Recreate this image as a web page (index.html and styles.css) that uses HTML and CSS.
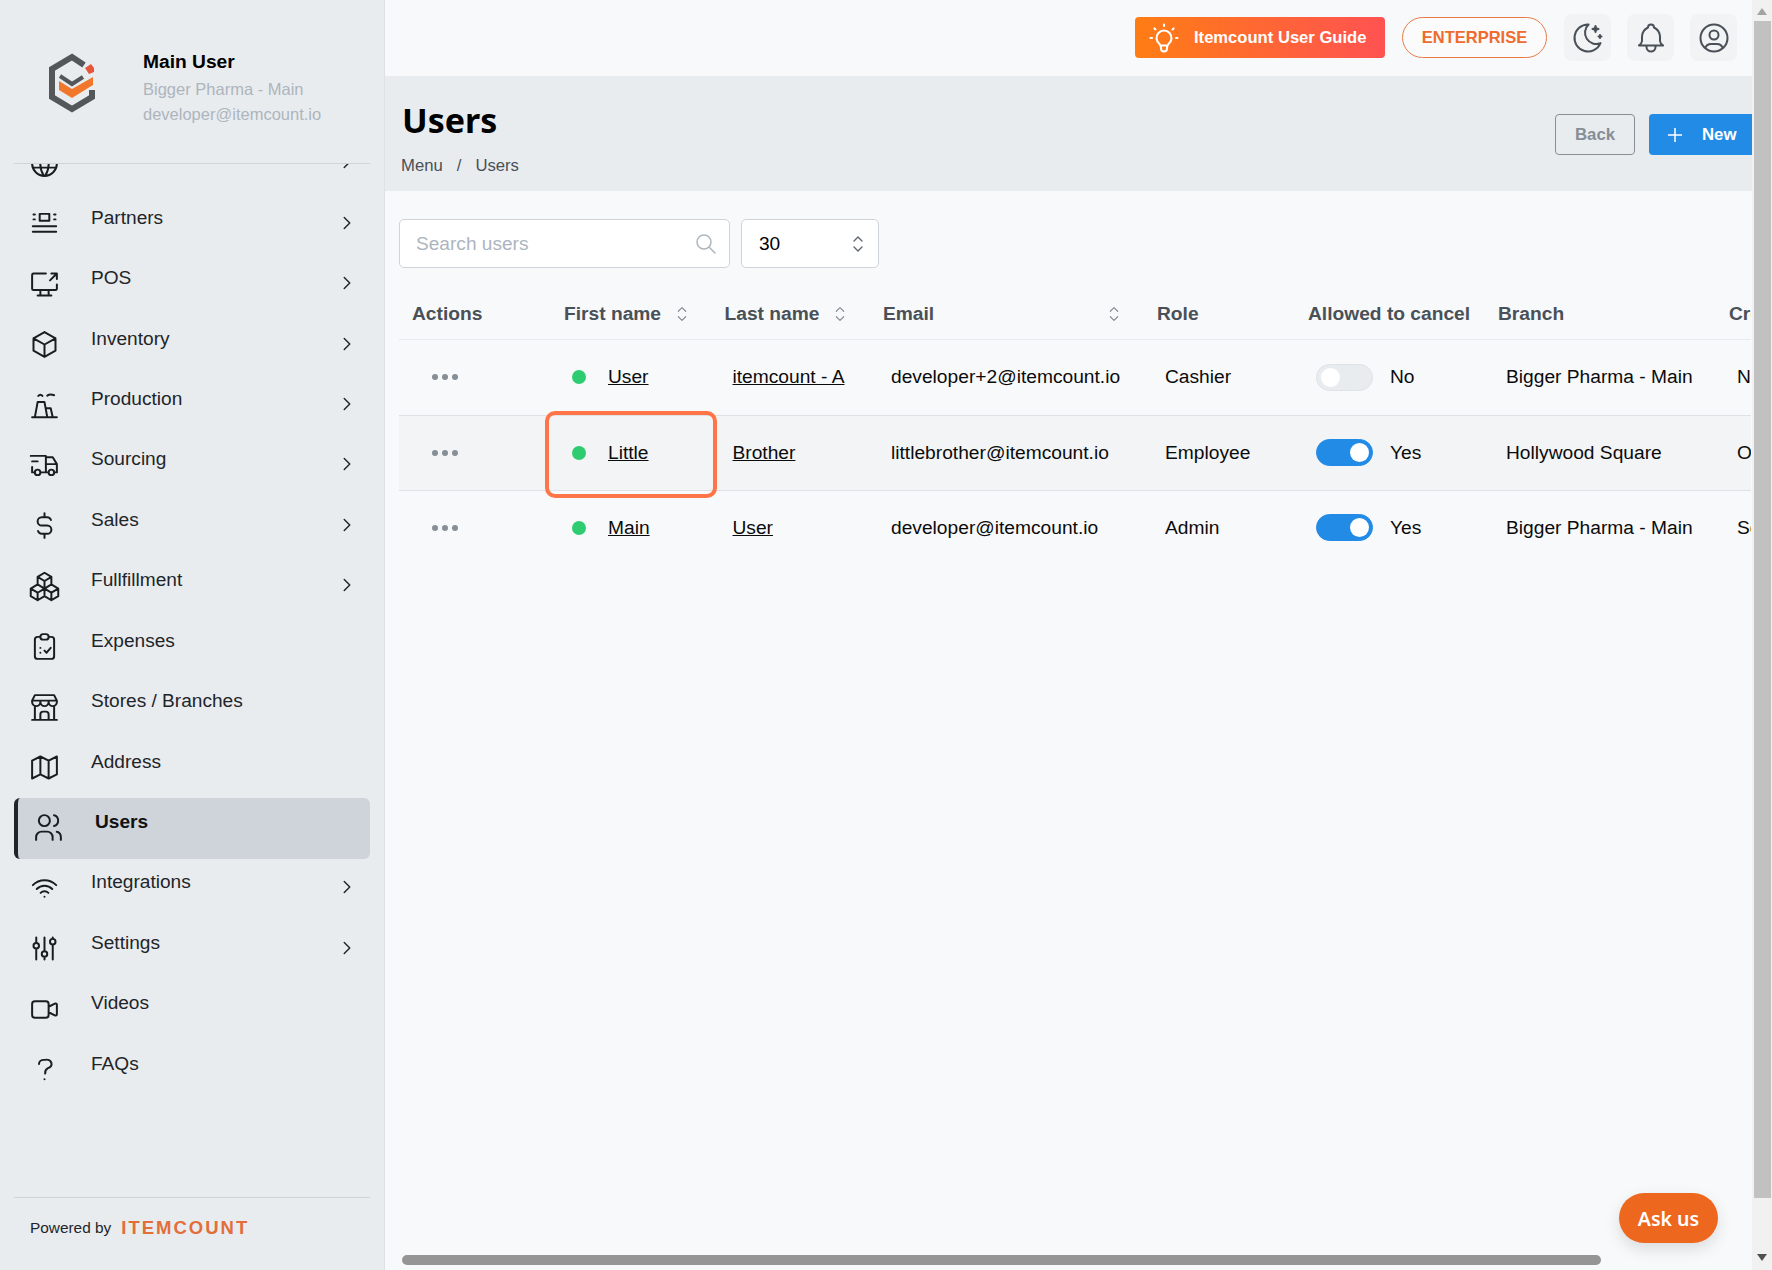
FILE: index.html
```html
<!DOCTYPE html>
<html lang="en">
<head>
    <meta charset="UTF-8">
    <title>Users</title>
    <link rel="stylesheet" href="styles.css">
</head>
<body>
    <svg class="icon-sprite" xmlns="http://www.w3.org/2000/svg">
        <symbol id="i-world" viewBox="0 0 24 24"><path d="M3 12a9 9 0 1 0 18 0a9 9 0 1 0 -18 0M3.600 9h16.800M3.600 15h16.800M11.500 3a17 17 0 0 0 0 18M12.500 3a17 17 0 0 1 0 18"/></symbol>
        <symbol id="i-partners" viewBox="0 0 24 24"><path d="M8.500 5h7v5h-7zM4 5.500h1M4 9h1M19 5.500h1M19 9h1M3.500 14h17M3.500 18h17"/></symbol>
        <symbol id="i-pos" viewBox="0 0 24 24"><path d="M21 12v3a1 1 0 0 1 -1 1h-16a1 1 0 0 1 -1 -1v-10a1 1 0 0 1 1 -1h9M7 20l10 0M9 16l0 4M15 16l0 4M17 4h4v4M16 9l5 -5"/></symbol>
        <symbol id="i-box" viewBox="0 0 24 24"><path d="M12 3l8 4.500l0 9l-8 4.500l-8 -4.500l0 -9l8 -4.500M12 12l8 -4.500M12 12l0 9M12 12l-8 -4.500"/></symbol>
        <symbol id="i-factory" viewBox="0 0 24 24"><path d="M3 20.500h18M5 20.500l2 -11h5l2 11M13 14h3.500l1.500 6.500M7.500 5c1 -1.200 2 -1.200 3 0M14 4.800c1.500 -1 3 -1 5 -.3"/></symbol>
        <symbol id="i-truck" viewBox="0 0 24 24"><path d="M7 17m-2 0a2 2 0 1 0 4 0a2 2 0 1 0 -4 0M17 17m-2 0a2 2 0 1 0 4 0a2 2 0 1 0 -4 0M5 17h-2v-4m-1 -8h11v12m-4 0h6m4 0h2v-6h-8m0 -5h5l3 5M3 9l4 0"/></symbol>
        <symbol id="i-dollar" viewBox="0 0 24 24"><path d="M16.700 8a3 3 0 0 0 -2.700 -2h-4a3 3 0 0 0 0 6h4a3 3 0 0 1 0 6h-4a3 3 0 0 1 -2.700 -2M12 3v3m0 12v3"/></symbol>
        <symbol id="i-packages" viewBox="0 0 24 24"><path d="M7 16.500l-5 -3l5 -3l5 3v5.500l-5 3zM2 13.500v5.500l5 3M7 16.545l5 -3.030M17 16.500l-5 -3l5 -3l5 3v5.500l-5 3zM12 19l5 3M17 16.500v5.500M17 16.500l5 -3M12 13.500v-5.500l-5 -3l5 -3l5 3v5.500M7 5.030v5.455M12 8l5 -3"/></symbol>
        <symbol id="i-clipboard" viewBox="0 0 24 24"><path d="M9 5h-2a2 2 0 0 0 -2 2v12a2 2 0 0 0 2 2h10a2 2 0 0 0 2 -2v-12a2 2 0 0 0 -2 -2h-2M9 5a2 2 0 0 1 2 -2h2a2 2 0 0 1 2 2v0a2 2 0 0 1 -2 2h-2a2 2 0 0 1 -2 -2zM9 16.500h.01M9 13h.01M12 15l1.500 1.500l3 -3.500"/></symbol>
        <symbol id="i-store" viewBox="0 0 24 24"><path d="M3 21l18 0M3 7v1a3 3 0 0 0 6 0v-1m0 1a3 3 0 0 0 6 0v-1m0 1a3 3 0 0 0 6 0v-1h-18l2 -4h14l2 4M5 21l0 -10.150M19 21l0 -10.150M9 21v-4a2 2 0 0 1 2 -2h2a2 2 0 0 1 2 2v4"/></symbol>
        <symbol id="i-map" viewBox="0 0 24 24"><path d="M3 7l6 -3l6 3l6 -3v13l-6 3l-6 -3l-6 3v-13M9 4v13M15 7v13"/></symbol>
        <symbol id="i-users" viewBox="0 0 24 24"><path d="M9 7m-4 0a4 4 0 1 0 8 0a4 4 0 1 0 -8 0M3 21v-2a4 4 0 0 1 4 -4h4a4 4 0 0 1 4 4v2M16 3.130a4 4 0 0 1 0 7.750M21 21v-2a4 4 0 0 0 -3 -3.850"/></symbol>
        <symbol id="i-wifi" viewBox="0 0 24 24"><path d="M12 18h.01M9.172 15.172a4 4 0 0 1 5.656 0M6.343 12.343a8 8 0 0 1 11.314 0M3.515 9.515c4.686 -4.687 12.284 -4.687 17 0"/></symbol>
        <symbol id="i-sliders" viewBox="0 0 24 24"><path d="M4 10a2 2 0 1 0 4 0a2 2 0 0 0 -4 0M6 4v4M6 12v8M10 16a2 2 0 1 0 4 0a2 2 0 0 0 -4 0M12 4v10M12 18v2M16 7a2 2 0 1 0 4 0a2 2 0 0 0 -4 0M18 4v1M18 9v11"/></symbol>
        <symbol id="i-video" viewBox="0 0 24 24"><path d="M15 10l4.553 -2.276a1 1 0 0 1 1.447 .894v6.764a1 1 0 0 1 -1.447 .894l-4.553 -2.276v-4M3 8a2 2 0 0 1 2 -2h8a2 2 0 0 1 2 2v8a2 2 0 0 1 -2 2h-8a2 2 0 0 1 -2 -2z"/></symbol>
        <symbol id="i-question" viewBox="0 0 24 24"><path d="M8 8a3.500 3 0 0 1 3.500 -3h1a3.500 3 0 0 1 2 6a3.500 4 0 0 0 -2 4M12 19l0 .01"/></symbol>
        <symbol id="i-chevron" viewBox="0 0 24 24"><path d="M9 6l6 6l-6 6"/></symbol>
        <symbol id="i-selector" viewBox="0 0 24 24"><path d="M8 9l4 -4l4 4M16 15l-4 4l-4 -4"/></symbol>
    </svg>

    <div class="app">
        <aside class="sidebar">
            <div class="profile">
                <svg class="logo" viewBox="0 0 48 60">
                    <path class="logo-hex" d="M36 12L24 4L4 16V44L24 56L44 44V37"/>
                    <path class="logo-check" d="M12 23L24 31L35 24"/>
                    <path class="logo-band" d="M11 28L24 36L45 24V32L24 45L11 37Z"/>
                    <path class="logo-dot" d="M37 15L43 11L46 15L46 19L41 21Z"/>
                </svg>
                <div class="profile-text">
                    <div class="profile-name">Main User</div>
                    <div class="profile-line">Bigger Pharma - Main</div>
                    <div class="profile-line">developer@itemcount.io</div>
                </div>
            </div>

            <nav class="nav">
                <ul class="nav-list">
                    <li class="nav-item"><svg class="nav-icon"><use href="#i-world"/></svg><span class="nav-label"></span><svg class="nav-arrow"><use href="#i-chevron"/></svg></li>
                    <li class="nav-item"><svg class="nav-icon"><use href="#i-partners"/></svg><span class="nav-label">Partners</span><svg class="nav-arrow"><use href="#i-chevron"/></svg></li>
                    <li class="nav-item"><svg class="nav-icon"><use href="#i-pos"/></svg><span class="nav-label">POS</span><svg class="nav-arrow"><use href="#i-chevron"/></svg></li>
                    <li class="nav-item"><svg class="nav-icon"><use href="#i-box"/></svg><span class="nav-label">Inventory</span><svg class="nav-arrow"><use href="#i-chevron"/></svg></li>
                    <li class="nav-item"><svg class="nav-icon"><use href="#i-factory"/></svg><span class="nav-label">Production</span><svg class="nav-arrow"><use href="#i-chevron"/></svg></li>
                    <li class="nav-item"><svg class="nav-icon"><use href="#i-truck"/></svg><span class="nav-label">Sourcing</span><svg class="nav-arrow"><use href="#i-chevron"/></svg></li>
                    <li class="nav-item"><svg class="nav-icon"><use href="#i-dollar"/></svg><span class="nav-label">Sales</span><svg class="nav-arrow"><use href="#i-chevron"/></svg></li>
                    <li class="nav-item"><svg class="nav-icon"><use href="#i-packages"/></svg><span class="nav-label">Fullfillment</span><svg class="nav-arrow"><use href="#i-chevron"/></svg></li>
                    <li class="nav-item"><svg class="nav-icon"><use href="#i-clipboard"/></svg><span class="nav-label">Expenses</span></li>
                    <li class="nav-item"><svg class="nav-icon"><use href="#i-store"/></svg><span class="nav-label">Stores / Branches</span></li>
                    <li class="nav-item"><svg class="nav-icon"><use href="#i-map"/></svg><span class="nav-label">Address</span></li>
                    <li class="nav-item active"><svg class="nav-icon"><use href="#i-users"/></svg><span class="nav-label">Users</span></li>
                    <li class="nav-item"><svg class="nav-icon"><use href="#i-wifi"/></svg><span class="nav-label">Integrations</span><svg class="nav-arrow"><use href="#i-chevron"/></svg></li>
                    <li class="nav-item"><svg class="nav-icon"><use href="#i-sliders"/></svg><span class="nav-label">Settings</span><svg class="nav-arrow"><use href="#i-chevron"/></svg></li>
                    <li class="nav-item"><svg class="nav-icon"><use href="#i-video"/></svg><span class="nav-label">Videos</span></li>
                    <li class="nav-item"><svg class="nav-icon"><use href="#i-question"/></svg><span class="nav-label">FAQs</span></li>
                </ul>
            </nav>

            <div class="powered">
                <span class="powered-by">Powered by</span>
                <span class="powered-brand">ITEMCOUNT</span>
            </div>
        </aside>

        <main class="main">
            <header class="topbar">
                <button class="guide-btn">
                    <svg class="guide-icon" viewBox="0 0 24 24"><path d="M3 12h1m8 -9v1m8 8h1m-15.400 -6.400l.7 .7m12.100 -.7l-.7 .7M9 16a5 5 0 1 1 6 0a3.500 3.500 0 0 0 -1 3a2 2 0 0 1 -4 0a3.500 3.500 0 0 0 -1 -3M9.700 17l4.600 0"/></svg>
                    Itemcount User Guide
                </button>
                <button class="plan-btn">ENTERPRISE</button>
                <button class="icon-btn"><svg viewBox="0 0 24 24"><path d="M12 3c.132 0 .263 0 .393 0a7.500 7.500 0 0 0 7.920 12.446a9 9 0 1 1 -8.313 -12.454zM17 4a2 2 0 0 0 2 2a2 2 0 0 0 -2 2a2 2 0 0 0 -2 -2a2 2 0 0 0 2 -2M19 11h2m-1 -1v2"/></svg></button>
                <button class="icon-btn"><svg viewBox="0 0 24 24"><path d="M10 5a2 2 0 1 1 4 0a7 7 0 0 1 4 6v3a4 4 0 0 0 2 3h-16a4 4 0 0 0 2 -3v-3a7 7 0 0 1 4 -6M9 17v1a3 3 0 0 0 6 0v-1"/></svg></button>
                <button class="icon-btn"><svg viewBox="0 0 24 24"><path d="M3 12a9 9 0 1 0 18 0a9 9 0 1 0 -18 0M9 10a3 3 0 1 0 6 0a3 3 0 1 0 -6 0M6.168 18.849a4 4 0 0 1 3.832 -2.849h4a4 4 0 0 1 3.834 2.855"/></svg></button>
            </header>

            <section class="page-head">
                <div>
                    <h1 class="page-title">Users</h1>
                    <div class="crumbs"><span>Menu</span><span>/</span><span>Users</span></div>
                </div>
                <div class="page-actions">
                    <button class="back-btn">Back</button>
                    <button class="new-btn"><svg viewBox="0 0 24 24"><path d="M12 5.500v13M5.500 12h13"/></svg>New</button>
                </div>
            </section>

            <section class="content">
                <div class="filters">
                    <div class="search-box">
                        <span class="search-hint">Search users</span>
                        <svg viewBox="0 0 24 24"><path d="M3 10a7 7 0 1 0 14 0a7 7 0 1 0 -14 0M21 21l-6 -6"/></svg>
                    </div>
                    <div class="page-size">
                        <span>30</span>
                        <svg><use href="#i-selector"/></svg>
                    </div>
                </div>

                <div class="table-wrap">
                    <table class="users-table">
                        <thead>
                            <tr>
                                <th class="col-actions">Actions</th>
                                <th class="col-first">First name<svg class="sort"><use href="#i-selector"/></svg></th>
                                <th class="col-last">Last name<svg class="sort"><use href="#i-selector"/></svg></th>
                                <th class="col-email">Email<svg class="sort sort-far"><use href="#i-selector"/></svg></th>
                                <th class="col-role">Role</th>
                                <th class="col-cancel">Allowed to cancel</th>
                                <th class="col-branch">Branch</th>
                                <th class="col-created">Created</th>
                            </tr>
                        </thead>
                        <tbody>
                            <tr>
                                <td><span class="dots"><i></i><i></i><i></i></span></td>
                                <td><span class="status"></span><a href="#">User</a></td>
                                <td><a href="#">itemcount - A</a></td>
                                <td>developer+2@itemcount.io</td>
                                <td>Cashier</td>
                                <td><span class="switch"></span><span class="switch-text">No</span></td>
                                <td>Bigger Pharma - Main</td>
                                <td>Nov 12, 2024</td>
                            </tr>
                            <tr class="row-hover">
                                <td><span class="dots"><i></i><i></i><i></i></span></td>
                                <td class="marked"><span class="status"></span><a href="#">Little</a><span class="marker"></span></td>
                                <td><a href="#">Brother</a></td>
                                <td>littlebrother@itemcount.io</td>
                                <td>Employee</td>
                                <td><span class="switch on"></span><span class="switch-text">Yes</span></td>
                                <td>Hollywood Square</td>
                                <td>Oct 03, 2024</td>
                            </tr>
                            <tr>
                                <td><span class="dots"><i></i><i></i><i></i></span></td>
                                <td><span class="status"></span><a href="#">Main</a></td>
                                <td><a href="#">User</a></td>
                                <td>developer@itemcount.io</td>
                                <td>Admin</td>
                                <td><span class="switch on"></span><span class="switch-text">Yes</span></td>
                                <td>Bigger Pharma - Main</td>
                                <td>Sep 21, 2024</td>
                            </tr>
                        </tbody>
                    </table>
                </div>

                <div class="hscroll"></div>
                <button class="ask-btn">Ask us</button>
            </section>
        </main>

        <div class="vscroll">
            <span class="vscroll-up"></span>
            <span class="vscroll-thumb"></span>
            <span class="vscroll-down"></span>
        </div>
    </div>
</body>
</html>
```

FILE: styles.css
```css
* {
    box-sizing: border-box;
}

html, body {
    height: 100%;
}

body {
    margin: 0;
    overflow: hidden;
    font-family: "Liberation Sans", Arial, sans-serif;
    color: #000;
    background: #f8f9fa;
}

button {
    font-family: inherit;
    cursor: pointer;
}

.icon-sprite {
    display: none;
}

.app {
    display: flex;
    height: 1270px;
}

/* sidebar */
.sidebar {
    flex: 0 0 385px;
    display: flex;
    flex-direction: column;
    background: #e9ecef;
    border-right: 1px solid #dee2e6;
}

.profile {
    flex: 0 0 164px;
    display: flex;
    align-items: flex-start;
    margin: 0 14px;
    padding: 51px 0 0 34px;
    border-bottom: 1px solid #ced4da;
}

.logo {
    flex: none;
    width: 48px;
    height: 60px;
    margin-top: 2px;
    fill: none;
}

.logo-hex {
    stroke: #54575a;
    stroke-width: 6;
}

.logo-check {
    stroke: #54575a;
    stroke-width: 4;
}

.logo-band {
    fill: #f0772b;
}

.logo-dot {
    fill: #e8563a;
}

.profile-text {
    margin-left: 47px;
}

.profile-name {
    font-size: 19.200px;
    font-weight: bold;
    line-height: 22px;
    margin-bottom: 4px;
}

.profile-line {
    font-size: 16.500px;
    line-height: 25px;
    color: #adb5bd;
}

.nav {
    flex: 1;
    overflow: hidden;
    padding: 0 14px;
}

.nav-list {
    list-style: none;
    margin: -30.400px 0 0;
    padding: 0;
}

.nav-item {
    display: flex;
    align-items: center;
    height: 60.430px;
    padding: 0 12px 0 13.500px;
    font-size: 19.100px;
    color: #212529;
}

.nav-icon {
    flex: none;
    width: 33px;
    height: 33px;
    margin-bottom: 1px;
    fill: none;
    stroke: #1a1d20;
    stroke-width: 1.450;
    stroke-linecap: round;
    stroke-linejoin: round;
}

.nav-label {
    flex: 1;
    margin: 0 0 13px 30.500px;
}

.nav-arrow {
    flex: none;
    width: 22px;
    height: 22px;
    margin-bottom: 3px;
    fill: none;
    stroke: #212529;
    stroke-width: 1.600;
    stroke-linecap: round;
    stroke-linejoin: round;
}

.nav-item.active {
    font-weight: bold;
    color: #111;
    background: #ced4da;
    border-left: 4px solid #212529;
    border-radius: 6px;
}

.powered {
    flex: 0 0 73px;
    display: flex;
    align-items: center;
    margin: 0 14px;
    padding: 0 0 12px 16px;
    border-top: 1px solid #ced4da;
}

.powered-by {
    font-size: 15.400px;
    color: #212529;
}

.powered-brand {
    margin-left: 10px;
    font-size: 18.500px;
    font-weight: bold;
    letter-spacing: 2px;
    color: #e26e3a;
}

/* main column */
.main {
    flex: 1;
    min-width: 0;
    display: flex;
    flex-direction: column;
}

.topbar {
    flex: 0 0 76px;
    display: flex;
    align-items: center;
    justify-content: flex-end;
    gap: 16px;
    padding: 0 15px 1px 0;
}

.guide-btn {
    display: flex;
    align-items: center;
    gap: 12px;
    width: 250px;
    height: 41px;
    padding: 0 0 0 11px;
    border: 0;
    border-radius: 4px;
    font-size: 16.600px;
    font-weight: bold;
    color: #fff;
    background: linear-gradient(90deg, #ff7d14, #ff5252);
}

.guide-icon {
    flex: none;
    width: 36px;
    height: 36px;
    fill: none;
    stroke: #fff;
    stroke-width: 1.400;
    stroke-linecap: round;
    stroke-linejoin: round;
}

.plan-btn {
    width: 145px;
    height: 41px;
    margin: 0 1px;
    padding: 0;
    border: 1.500px solid #ea7a45;
    border-radius: 21px;
    background: #fbfbfb;
    font-size: 16.500px;
    font-weight: bold;
    color: #ee6c2e;
}

.icon-btn {
    display: flex;
    align-items: center;
    justify-content: center;
    width: 47px;
    height: 47px;
    padding: 0;
    border: 0;
    border-radius: 8px;
    background: #f1f3f5;
}

.icon-btn svg {
    width: 36px;
    height: 36px;
    fill: none;
    stroke: #495057;
    stroke-width: 1.350;
    stroke-linecap: round;
    stroke-linejoin: round;
}

.page-head {
    flex: 0 0 115px;
    display: flex;
    justify-content: space-between;
    padding: 21px 0 0 17px;
    background: #e9ecef;
}

.page-title {
    margin: 0;
    font-family: "Noto Sans", sans-serif;
    font-size: 34px;
    font-weight: 700;
    line-height: 46px;
}

.crumbs {
    display: flex;
    gap: 14px;
    margin: 13px 0 0 -1px;
    font-size: 16.700px;
    color: #495057;
}

.page-actions {
    display: flex;
    gap: 14px;
    margin-top: 17px;
}

.back-btn {
    width: 80px;
    height: 41px;
    padding: 0;
    border: 1px solid #868e96;
    border-radius: 4px;
    background: transparent;
    font-size: 16.800px;
    font-weight: bold;
    color: #868e96;
}

.new-btn {
    display: flex;
    align-items: center;
    gap: 14px;
    width: 103px;
    height: 41px;
    padding: 0 0 0 13px;
    border: 0;
    border-radius: 4px 0 0 4px;
    background: #228be6;
    font-size: 16.800px;
    font-weight: bold;
    color: #fff;
}

.new-btn svg {
    flex: none;
    width: 26px;
    height: 26px;
    fill: none;
    stroke: #fff;
    stroke-width: 1.400;
}

.content {
    position: relative;
    flex: 1;
    min-height: 0;
    overflow: hidden;
    padding: 28px 0 0 14px;
}

.filters {
    display: flex;
    gap: 11px;
    margin-bottom: 22px;
}

.search-box,
.page-size {
    display: flex;
    align-items: center;
    justify-content: space-between;
    height: 49px;
    background: #fff;
    border: 1px solid #ced4da;
    border-radius: 5px;
    font-size: 19.100px;
}

.search-box {
    width: 331px;
    padding: 0 11px 0 16px;
    color: #adb5bd;
}

.search-box svg {
    width: 24px;
    height: 24px;
    fill: none;
    stroke: #adb5bd;
    stroke-width: 1.500;
    stroke-linecap: round;
}

.page-size {
    width: 138px;
    padding: 0 8px 0 17px;
}

.page-size svg {
    width: 24px;
    height: 24px;
    fill: none;
    stroke: #5c636a;
    stroke-width: 1.300;
    stroke-linecap: round;
    stroke-linejoin: round;
}

.table-wrap {
    margin-right: 1px;
    overflow: hidden;
}

.users-table {
    table-layout: fixed;
    width: 1517px;
    border-collapse: collapse;
}

.col-actions { width: 152px; }
.col-first { width: 160.500px; }
.col-last { width: 158.500px; }
.col-email { width: 274px; }
.col-role { width: 151px; }
.col-cancel { width: 190px; }
.col-branch { width: 231px; }
.col-created { width: 200px; }

.users-table th {
    height: 49px;
    padding: 0 0 0 13px;
    text-align: left;
    white-space: nowrap;
    font-size: 19.200px;
    color: #495057;
    border-bottom: 1px solid #e9ecef;
}

.sort {
    width: 22px;
    height: 22px;
    margin: 0 0 -5px 10px;
    fill: none;
    stroke: #868e96;
    stroke-width: 1.300;
    stroke-linecap: round;
    stroke-linejoin: round;
}

.sort-far {
    margin-left: 169px;
}

.users-table td {
    height: 75px;
    padding: 0 0 0 21px;
    white-space: nowrap;
    font-size: 19.200px;
    color: #0b0b0b;
}

.users-table tbody tr:first-child td {
    height: 76px;
}

.users-table tbody tr + tr td {
    border-top: 1px solid #dee2e6;
}

.row-hover td {
    background: #f3f4f6;
}

.users-table a {
    color: #0b0b0b;
}

.dots {
    display: flex;
    gap: 4px;
    margin-left: 12px;
}

.dots i {
    width: 6px;
    height: 6px;
    border-radius: 50%;
    background: #868e96;
}

.status {
    display: inline-block;
    width: 14px;
    height: 14px;
    margin-right: 22px;
    border-radius: 50%;
    background: #2ecc71;
    vertical-align: -1px;
}

.marked {
    position: relative;
}

.marker {
    position: absolute;
    top: -5px;
    left: -6px;
    width: 172px;
    height: 87px;
    border: 4px solid #ff7548;
    border-radius: 10px;
}

.switch {
    position: relative;
    display: inline-block;
    width: 57px;
    height: 27px;
    border: 1px solid #dee2e6;
    border-radius: 14px;
    background: #e9ecef;
    vertical-align: middle;
}

.switch::after {
    content: "";
    position: absolute;
    top: 3px;
    left: 4px;
    width: 19px;
    height: 19px;
    border-radius: 50%;
    background: #fff;
}

.switch.on {
    border-color: #228be6;
    background: #228be6;
}

.switch.on::after {
    left: 33px;
}

.switch-text {
    margin-left: 17px;
    vertical-align: middle;
}

.hscroll {
    position: absolute;
    left: 17px;
    bottom: 5px;
    width: 1199px;
    height: 10px;
    border-radius: 5px;
    background: #959595;
}

.ask-btn {
    position: absolute;
    right: 34px;
    bottom: 27px;
    width: 99px;
    height: 50px;
    padding: 0;
    border: 0;
    border-radius: 25px;
    background: #ee671f;
    box-shadow: 0 6px 16px rgba(0, 0, 0, 0.12);
    font-family: "Noto Sans", sans-serif;
    font-size: 19.500px;
    font-weight: 600;
    color: #fff;
}

/* page scrollbar */
.vscroll {
    flex: 0 0 20px;
    display: flex;
    flex-direction: column;
    align-items: center;
    background: #f1f1f1;
}

.vscroll-up,
.vscroll-down {
    flex: 0 0 0;
    width: 0;
    height: 0;
    border-left: 5px solid transparent;
    border-right: 5px solid transparent;
}

.vscroll-up {
    margin: 8px 0 6px;
    border-bottom: 7px solid #a3a3a3;
}

.vscroll-thumb {
    width: 17px;
    height: 1177px;
    background: #c1c1c1;
}

.vscroll-down {
    margin-top: 56px;
    border-top: 7px solid #505050;
}
```
